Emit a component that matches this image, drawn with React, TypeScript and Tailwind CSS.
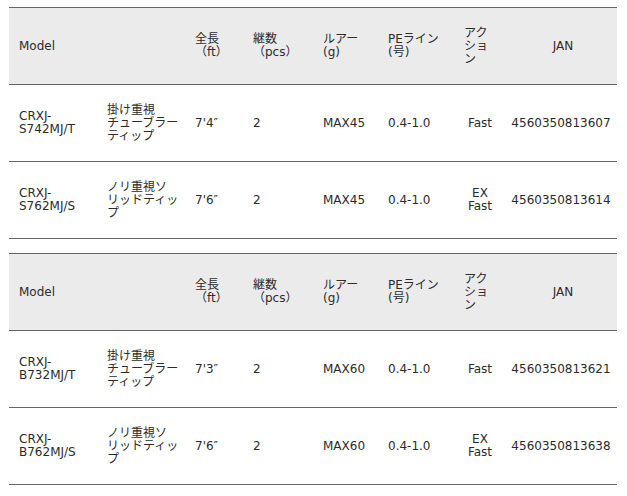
import React from "react";

type Row = {
  model: string[];
  name: string[];
  length: string;
  pcs: string;
  lure: string;
  pe: string;
  action: string[];
  jan: string;
};

const tables: Row[][] = [
  [
    {
      model: ["CRXJ-", "S742MJ/T"],
      name: ["掛け重視", "チューブラー", "ティップ"],
      length: "7'4″",
      pcs: "2",
      lure: "MAX45",
      pe: "0.4-1.0",
      action: ["Fast"],
      jan: "4560350813607",
    },
    {
      model: ["CRXJ-", "S762MJ/S"],
      name: ["ノリ重視ソ", "リッドティッ", "プ"],
      length: "7'6″",
      pcs: "2",
      lure: "MAX45",
      pe: "0.4-1.0",
      action: ["EX", "Fast"],
      jan: "4560350813614",
    },
  ],
  [
    {
      model: ["CRXJ-", "B732MJ/T"],
      name: ["掛け重視", "チューブラー", "ティップ"],
      length: "7'3″",
      pcs: "2",
      lure: "MAX60",
      pe: "0.4-1.0",
      action: ["Fast"],
      jan: "4560350813621",
    },
    {
      model: ["CRXJ-", "B762MJ/S"],
      name: ["ノリ重視ソ", "リッドティッ", "プ"],
      length: "7'6″",
      pcs: "2",
      lure: "MAX60",
      pe: "0.4-1.0",
      action: ["EX", "Fast"],
      jan: "4560350813638",
    },
  ],
];

const grid =
  "grid grid-cols-[91px_87px_58px_70px_65px_75px_50px_112px] items-center h-[77px] border-b border-[#666666]";

function Lines({ lines }: { lines: string[] }) {
  return (
    <>
      {lines.map((l, i) => (
        <div key={i} className="whitespace-nowrap">
          {l}
        </div>
      ))}
    </>
  );
}

function SpecTable({ rows }: { rows: Row[] }) {
  return (
    <div className="w-[608px] border-t border-[#666666]">
      {/* Header */}
      <div className={`${grid} bg-[#ebebeb]`}>
        <div className="pl-[10px]">Model</div>
        <div />
        <div className="pl-2">
          <Lines lines={["全長", "（ft）"]} />
        </div>
        <div className="pl-2">
          <Lines lines={["継数", "（pcs）"]} />
        </div>
        <div className="pl-2">
          <Lines lines={["ルアー", "(g)"]} />
        </div>
        <div className="pl-2">
          <Lines lines={["PEライン", "(号)"]} />
        </div>
        <div className="pl-[9px]">
          <Lines lines={["アク", "ショ", "ン"]} />
        </div>
        <div className="text-center pl-1">JAN</div>
      </div>

      {rows.map((r) => (
        <div key={r.jan} className={grid}>
          <div className="pl-[10px]">
            <Lines lines={r.model} />
          </div>
          <div className="pl-[7px]">
            <Lines lines={r.name} />
          </div>
          <div className="pl-2">{r.length}</div>
          <div className="pl-2">{r.pcs}</div>
          <div className="pl-2">{r.lure}</div>
          <div className="pl-2">{r.pe}</div>
          <div className="text-center pl-[2px] pr-[2px]">
            <Lines lines={r.action} />
          </div>
          <div className="text-center">{r.jan}</div>
        </div>
      ))}
    </div>
  );
}

export default function App() {
  return (
    <div
      className="min-h-[496px] w-[627px] bg-white pl-[9px] pt-[7px] text-[12px] leading-[13px] text-[#2b2b2b]"
      style={{ fontFamily: "'DejaVu Sans', 'Noto Sans CJK JP', sans-serif" }}
    >
      <SpecTable rows={tables[0]} />
      <div className="h-[14px]" />
      <SpecTable rows={tables[1]} />
    </div>
  );
}
